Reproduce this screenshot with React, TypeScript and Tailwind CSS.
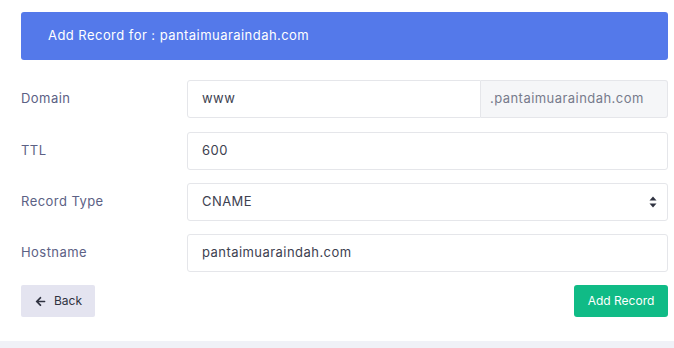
import { FaArrowLeft } from "react-icons/fa"

const rows = [
    { label: "Domain", value: "www", addon: ".pantaimuaraindah.com", mt: "mt-0" },
    { label: "TTL", value: "600", mt: "mt-[14px]" },
    { label: "Record Type", value: "CNAME", select: true, mt: "mt-[13px]" },
    { label: "Hostname", value: "pantaimuaraindah.com", mt: "mt-[13px]" },
]

export default function App() {
    return (
        <div className="w-[674px] h-[348px] bg-[#f0f1f7] font-['Inter',sans-serif] text-[13px] tracking-[0.45px]">
            <div className="bg-white h-[341px] pt-[12px] px-[21px] pr-[6px]">
                {/* Header */}
                <div className="h-[48px] bg-[#5479ea] rounded-[3px] flex items-center pl-[27px] text-white">
                    Add Record for : pantaimuaraindah.com
                </div>

                {/* Form */}
                <div className="mt-[20px] flex flex-col">
                    {rows.map((r) => (
                        <div key={r.label} className={`flex items-center h-[38px] ${r.mt}`}>
                            <label className="w-[166px] text-[#5c6185]">{r.label}</label>
                            <div className="flex-1 flex h-full">
                                <div className={`flex-1 flex items-center border border-[#e5e6ea] bg-white pl-[14px] pr-[10px] text-[#3d4150] ${r.addon ? "rounded-l-[3px]" : "rounded-[3px]"}`}>
                                    <span className="flex-1">{r.value}</span>
                                    {r.select && (
                                        <svg width="8" height="12" viewBox="0 0 8 12" className="text-[#2f3240]">
                                            <path d="M4 0.5 L7.5 4.5 H0.5 Z" fill="currentColor" />
                                            <path d="M4 11.5 L7.5 7.5 H0.5 Z" fill="currentColor" />
                                        </svg>
                                    )}
                                </div>
                                {r.addon && (
                                    <div className="w-[187px] flex items-center border border-l-0 border-[#e5e6ea] bg-[#f5f6f8] rounded-r-[3px] pl-[9px] text-[#777b8c]">
                                        {r.addon}
                                    </div>
                                )}
                            </div>
                        </div>
                    ))}
                </div>

                {/* Buttons */}
                <div className="mt-[13px] flex justify-between tracking-normal">
                    <button className="h-[32px] w-[74px] bg-[#e4e4f0] rounded-[2px] flex items-center gap-[8px] pl-[14px] text-[#2f3240] text-[12px]">
                        <FaArrowLeft size={11} />
                        Back
                    </button>
                    <button className="h-[32px] w-[94px] bg-[#10bb86] rounded-[3px] text-white text-[12px]">
                        Add Record
                    </button>
                </div>
            </div>
        </div>
    )
}
